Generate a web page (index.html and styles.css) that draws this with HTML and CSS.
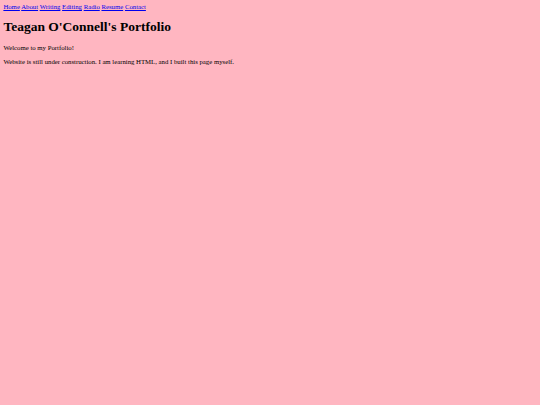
FILE: index.html
```html
<!DOCTYPE html>
<html>
<head>
<meta charset="utf-8">
<title>Teagan O'Connell's Portfolio</title>
<link rel="stylesheet" href="styles.css">
</head>
<body>
<nav class="nav">
<a href="#">Home</a>
<a href="#">About</a>
<a href="#">Writing</a>
<a href="#">Editing</a>
<a href="#">Radio</a>
<a href="#">Resume</a>
<a href="#">Contact</a>
</nav>
<h1 class="title">Teagan O'Connell's Portfolio</h1>
<p class="text">Welcome to my Portfolio!</p>
<p class="text">Website is still under construction. I am learning HTML, and I built this page myself.</p>
</body>
</html>
```
FILE: styles.css
```css
html {
  background: #ffb6c1;
}
body {
  margin: 3.375px;
  font-family: "Liberation Serif", "Times New Roman", serif;
  font-size: 6.75px;
  color: #000;
}
.nav a {
  color: #0000ee;
}
.title {
  font-size: 13.5px;
  margin: 9.045px 0;
}
.text {
  margin: 6.75px 0;
}
```
